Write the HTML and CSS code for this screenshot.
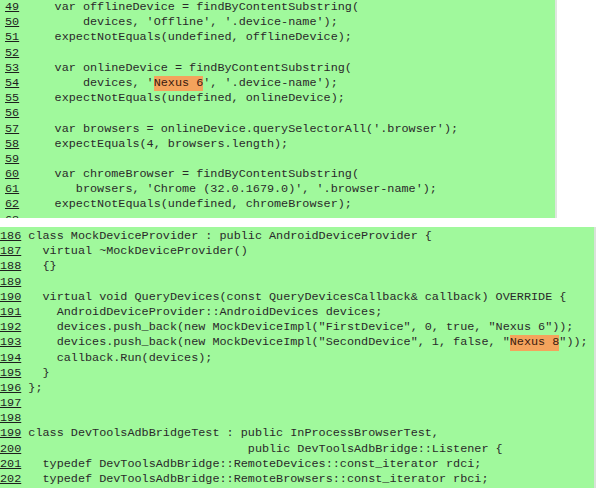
FILE: index.html
```html
<!DOCTYPE html>
<html>
<head>
<meta charset="utf-8">
<link rel="stylesheet" href="styles.css">
</head>
<body>
<div class="panel panel-top">
<div class="line"><span class="num">49</span> <span class="code">    var offlineDevice = findByContentSubstring(</span></div>
<div class="line"><span class="num">50</span> <span class="code">        devices, 'Offline', '.device-name');</span></div>
<div class="line"><span class="num">51</span> <span class="code">    expectNotEquals(undefined, offlineDevice);</span></div>
<div class="line"><span class="num">52</span> <span class="code"></span></div>
<div class="line"><span class="num">53</span> <span class="code">    var onlineDevice = findByContentSubstring(</span></div>
<div class="line"><span class="num">54</span> <span class="code">        devices, '<span class="hl">Nexus 6</span>', '.device-name');</span></div>
<div class="line"><span class="num">55</span> <span class="code">    expectNotEquals(undefined, onlineDevice);</span></div>
<div class="line"><span class="num">56</span> <span class="code"></span></div>
<div class="line"><span class="num">57</span> <span class="code">    var browsers = onlineDevice.querySelectorAll('.browser');</span></div>
<div class="line"><span class="num">58</span> <span class="code">    expectEquals(4, browsers.length);</span></div>
<div class="line"><span class="num">59</span> <span class="code"></span></div>
<div class="line"><span class="num">60</span> <span class="code">    var chromeBrowser = findByContentSubstring(</span></div>
<div class="line"><span class="num">61</span> <span class="code">       browsers, 'Chrome (32.0.1679.0)', '.browser-name');</span></div>
<div class="line"><span class="num">62</span> <span class="code">    expectNotEquals(undefined, chromeBrowser);</span></div>
<div class="line"><span class="num">63</span> <span class="code"></span></div>
</div>
<div class="panel panel-bottom">
<div class="line"><span class="num">186</span> <span class="code">class MockDeviceProvider : public AndroidDeviceProvider {</span></div>
<div class="line"><span class="num">187</span> <span class="code">  virtual ~MockDeviceProvider()</span></div>
<div class="line"><span class="num">188</span> <span class="code">  {}</span></div>
<div class="line"><span class="num">189</span> <span class="code"></span></div>
<div class="line"><span class="num">190</span> <span class="code">  virtual void QueryDevices(const QueryDevicesCallback&amp; callback) OVERRIDE {</span></div>
<div class="line"><span class="num">191</span> <span class="code">    AndroidDeviceProvider::AndroidDevices devices;</span></div>
<div class="line"><span class="num">192</span> <span class="code">    devices.push_back(new MockDeviceImpl("FirstDevice", 0, true, "Nexus 6"));</span></div>
<div class="line"><span class="num">193</span> <span class="code">    devices.push_back(new MockDeviceImpl("SecondDevice", 1, false, "<span class="hl">Nexus 8</span>"));</span></div>
<div class="line"><span class="num">194</span> <span class="code">    callback.Run(devices);</span></div>
<div class="line"><span class="num">195</span> <span class="code">  }</span></div>
<div class="line"><span class="num">196</span> <span class="code">};</span></div>
<div class="line"><span class="num">197</span> <span class="code"></span></div>
<div class="line"><span class="num">198</span> <span class="code"></span></div>
<div class="line"><span class="num">199</span> <span class="code">class DevToolsAdbBridgeTest : public InProcessBrowserTest,</span></div>
<div class="line"><span class="num">200</span> <span class="code">                               public DevToolsAdbBridge::Listener {</span></div>
<div class="line"><span class="num">201</span> <span class="code">  typedef DevToolsAdbBridge::RemoteDevices::const_iterator rdci;</span></div>
<div class="line"><span class="num">202</span> <span class="code">  typedef DevToolsAdbBridge::RemoteBrowsers::const_iterator rbci;</span></div>
</div>
</body>
</html>
```

FILE: styles.css
```css
html, body {
  margin: 0;
  padding: 0;
  background: #ffffff;
}

body {
  width: 600px;
  height: 488px;
  overflow: hidden;
}

.panel {
  background: #a0f99c;
  font-family: "Courier New", "Nimbus Mono PS", "Nimbus Mono L", "FreeMono", "Liberation Mono", monospace;
  font-size: 11.8px;
  line-height: 15.2px;
  color: #2a2a2a;
  overflow: hidden;
  box-sizing: border-box;
}

.panel-top {
  width: 557px;
  height: 218px;
  padding-left: 5px;
  border-right: 2px solid #dfe6df;
}

.panel-bottom {
  width: 596px;
  height: 261px;
  margin-top: 9px;
  padding-top: 2px;
  border-right: 2px solid #d9e2d9;
}

.line {
  white-space: pre;
  height: 15.2px;
}

.num {
  text-decoration: underline;
  color: #1e1e1e;
}

.hl {
  background: #f4a35c;
  color: #3a1a10;
  display: inline-block;
  line-height: 15.2px;
}
```
